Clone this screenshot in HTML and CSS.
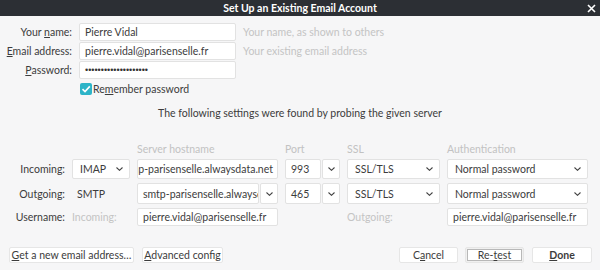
FILE: index.html
```html
<!DOCTYPE html>
<html>
<head>
<meta charset="utf-8">
<link rel="stylesheet" href="styles.css">
</head>
<body>
<div class="titlebar">
  <span class="title">Set Up an Existing Email Account</span>
  <svg class="close" width="9" height="9" viewBox="0 0 9 9"><path d="M1 1L8 8M8 1L1 8" stroke="#ffffff" stroke-width="1.6" fill="none"/></svg>
</div>
<div class="content">
  <div class="identity">
    <label class="label">Your <u>n</u>ame:</label>
    <div class="field">Pierre Vidal</div>
    <span class="hint">Your name, as shown to others</span>
    <label class="label"><u>E</u>mail address:</label>
    <div class="field">pierre.vidal@parisenselle.fr</div>
    <span class="hint">Your existing email address</span>
    <label class="label"><u>P</u>assword:</label>
    <div class="field"><span class="dots">••••••••••••••••••••</span></div>
    <span></span>
  </div>
  <div class="remember">
    <span class="checkbox"><svg width="12" height="12" viewBox="0 0 12 12"><path d="M2.5 6.2L5 8.6L9.8 3.4" stroke="#ffffff" stroke-width="1.6" fill="none"/></svg></span>
    <span>Re<u>m</u>ember password</span>
  </div>
  <p class="status">The following settings were found by probing the given server</p>
  <div class="servers">
    <span></span><span></span>
    <span class="colhead">Server hostname</span>
    <span class="colhead">Port</span>
    <span class="colhead">SSL</span>
    <span class="colhead">Authentication</span>

    <span class="rowlabel">Incoming:</span>
    <div class="field select">IMAP<svg class="chev" width="7" height="4" viewBox="0 0 7 4"><path d="M0.5 0.5L3.5 3.3L6.5 0.5" stroke="#444" stroke-width="1.1" fill="none"/></svg></div>
    <div class="field scrolled"><span>imap-parisenselle.alwaysdata.net</span></div>
    <div class="combo"><div class="field port">993</div><div class="field drop"><svg width="7" height="4" viewBox="0 0 7 4"><path d="M0.5 0.5L3.5 3.3L6.5 0.5" stroke="#444" stroke-width="1.1" fill="none"/></svg></div></div>
    <div class="field select">SSL/TLS<svg class="chev" width="7" height="4" viewBox="0 0 7 4"><path d="M0.5 0.5L3.5 3.3L6.5 0.5" stroke="#444" stroke-width="1.1" fill="none"/></svg></div>
    <div class="field select">Normal password<svg class="chev" width="7" height="4" viewBox="0 0 7 4"><path d="M0.5 0.5L3.5 3.3L6.5 0.5" stroke="#444" stroke-width="1.1" fill="none"/></svg></div>

    <span class="rowlabel">Outgoing:</span>
    <span class="plain">SMTP</span>
    <div class="combo"><div class="field host">smtp-parisenselle.alwaysdata.net</div><div class="field drop"><svg width="7" height="4" viewBox="0 0 7 4"><path d="M0.5 0.5L3.5 3.3L6.5 0.5" stroke="#444" stroke-width="1.1" fill="none"/></svg></div></div>
    <div class="combo"><div class="field port">465</div><div class="field drop"><svg width="7" height="4" viewBox="0 0 7 4"><path d="M0.5 0.5L3.5 3.3L6.5 0.5" stroke="#444" stroke-width="1.1" fill="none"/></svg></div></div>
    <div class="field select">SSL/TLS<svg class="chev" width="7" height="4" viewBox="0 0 7 4"><path d="M0.5 0.5L3.5 3.3L6.5 0.5" stroke="#444" stroke-width="1.1" fill="none"/></svg></div>
    <div class="field select">Normal password<svg class="chev" width="7" height="4" viewBox="0 0 7 4"><path d="M0.5 0.5L3.5 3.3L6.5 0.5" stroke="#444" stroke-width="1.1" fill="none"/></svg></div>

    <span class="rowlabel user">Username:</span>
    <span class="sublabel">Incoming:</span>
    <div class="field">pierre.vidal@parisenselle.fr</div>
    <span></span>
    <span class="sublabel">Outgoing:</span>
    <div class="field">pierre.vidal@parisenselle.fr</div>
  </div>
  <div class="actions">
    <button class="btn btn-new"><u>G</u>et a new email address…</button>
    <button class="btn btn-adv"><u>A</u>dvanced config</button>
    <span class="spacer"></span>
    <button class="btn btn-cancel">C<u>a</u>ncel</button>
    <button class="btn btn-retest"><span class="ring">Re-<u>t</u>est</span></button>
    <button class="btn btn-done"><u>D</u>one</button>
  </div>
</div>
</body>
</html>
```
FILE: styles.css
```css
html, body {
  margin: 0;
  padding: 0;
}
body {
  width: 600px;
  height: 270px;
  overflow: hidden;
  background: #f6f6f7;
  font-family: Lato, "Open Sans", sans-serif;
  font-size: 10.5px;
  color: #3c3c3c;
}
u {
  text-decoration: underline;
  text-underline-offset: 1px;
}
.titlebar {
  height: 16px;
  background: #2c2f34;
  display: flex;
  align-items: center;
  justify-content: center;
  position: relative;
}
.title {
  color: #ffffff;
  font-weight: bold;
  font-size: 10.5px;
}
.close {
  position: absolute;
  right: 4px;
  top: 4px;
}
.content {
  display: flex;
  flex-direction: column;
}
.identity {
  margin-top: 7px;
  display: grid;
  grid-template-columns: 72px 157px auto;
  grid-auto-rows: 18px;
  column-gap: 7px;
  row-gap: 1px;
  align-items: center;
}
.label {
  text-align: right;
  white-space: nowrap;
}
.field {
  box-sizing: border-box;
  height: 100%;
  background: #ffffff;
  border: 1px solid #e2e2e2;
  border-radius: 2px;
  display: flex;
  align-items: center;
  padding: 0 5px;
  white-space: nowrap;
  overflow: hidden;
}
.hint {
  color: #c4c4c4;
  white-space: nowrap;
}
.dots {
  font-family: "Liberation Sans", sans-serif;
  font-size: 9px;
  color: #333;
}
.remember {
  margin-top: 4px;
  padding-left: 80px;
  height: 12px;
  display: flex;
  align-items: center;
  gap: 1px;
}
.checkbox {
  width: 12px;
  height: 12px;
  border-radius: 2px;
  background: #2db4c8;
  display: flex;
}
.status {
  margin: 11px 0 0;
  height: 14px;
  line-height: 14px;
  text-align: center;
}
.servers {
  margin-top: 23px;
  display: grid;
  grid-template-columns: 65px 58px 141px 55px 93px 141px;
  grid-template-rows: 12px 20px 21px 18px;
  column-gap: 7px;
  row-gap: 4px;
  align-items: center;
}
.colhead {
  color: #c2c2c2;
  white-space: nowrap;
  line-height: 12px;
}
.rowlabel {
  text-align: right;
  white-space: nowrap;
}
.sublabel {
  color: #c4c4c4;
  white-space: nowrap;
}
.plain {
  padding-left: 5px;
}
.select {
  justify-content: space-between;
  padding: 0 6px 0 7px;
}
.chev {
  flex: none;
}
.scrolled {
  justify-content: flex-end;
  padding-right: 4px;
}
.scrolled span {
  flex: none;
}
.combo {
  display: flex;
  height: 100%;
  gap: 1px;
}
.combo .field {
  height: 100%;
}
.host {
  flex: 1;
  min-width: 0;
}
.port {
  flex: 1;
  min-width: 0;
}
.drop {
  width: 18px;
  flex: none;
  justify-content: center;
  padding: 0;
}
.actions {
  margin-top: 21px;
  padding: 0 8px 0 9px;
  display: flex;
  align-items: center;
  height: 16px;
}
.btn {
  box-sizing: border-box;
  height: 16px;
  margin: 0;
  padding: 0;
  background: #ffffff;
  border: 1px solid #e6e6e6;
  border-radius: 2px;
  font-family: inherit;
  font-size: 10.5px;
  color: #3c3c3c;
  display: flex;
  align-items: center;
  justify-content: center;
  white-space: nowrap;
}
.btn-new { width: 125px; }
.btn-adv { width: 81px; margin-left: 8px; }
.spacer { flex: 1; }
.btn-cancel { width: 59px; }
.btn-retest {
  width: 59px;
  margin-left: 7px;
  background: #f0f0f0;
  padding: 1px;
}
.ring {
  box-sizing: border-box;
  width: 100%;
  height: 100%;
  border: 1px solid #b8b8b8;
  background: #ffffff;
  display: flex;
  align-items: center;
  justify-content: center;
}
.btn-done {
  width: 60px;
  margin-left: 8px;
  font-weight: bold;
}
```
